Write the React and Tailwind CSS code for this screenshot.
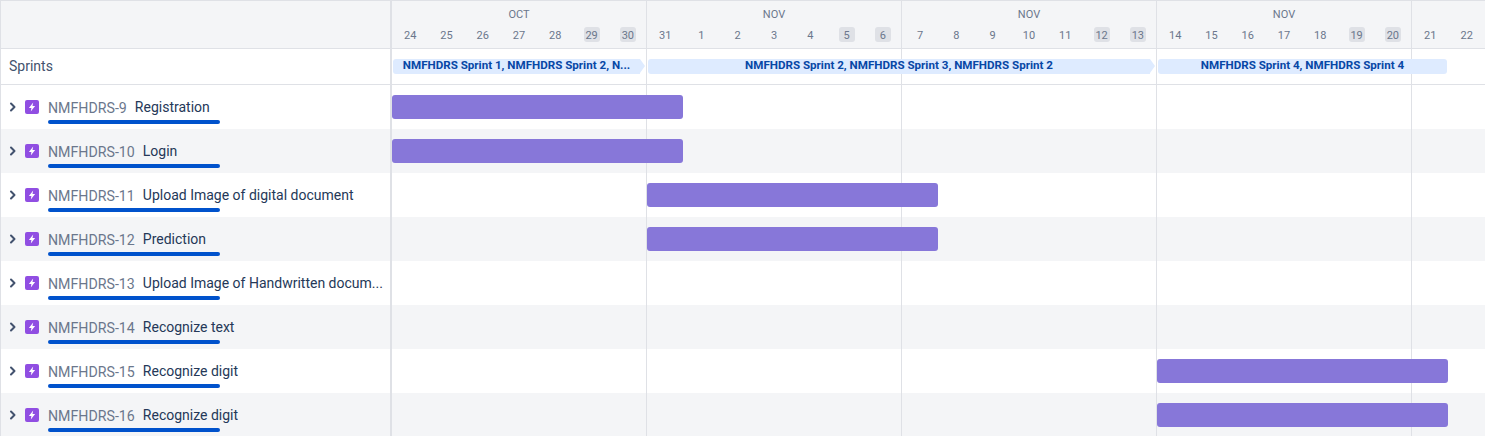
import React from 'react';

const weeks = [
    { month: 'OCT', days: [24, 25, 26, 27, 28, 29, 30] },
    { month: 'NOV', days: [31, 1, 2, 3, 4, 5, 6] },
    { month: 'NOV', days: [7, 8, 9, 10, 11, 12, 13] },
    { month: 'NOV', days: [14, 15, 16, 17, 18, 19, 20] },
];

const issues = [
    { id: 'NMFHDRS-9', name: 'Registration', bar: 'ml-0 w-[291px]' },
    { id: 'NMFHDRS-10', name: 'Login', bar: 'ml-0 w-[291px]' },
    { id: 'NMFHDRS-11', name: 'Upload Image of digital document', bar: 'ml-[255px] w-[291px]' },
    { id: 'NMFHDRS-12', name: 'Prediction', bar: 'ml-[255px] w-[291px]' },
    { id: 'NMFHDRS-13', name: 'Upload Image of Handwritten docum...' },
    { id: 'NMFHDRS-14', name: 'Recognize text' },
    { id: 'NMFHDRS-15', name: 'Recognize digit', bar: 'ml-[765px] w-[291px]' },
    { id: 'NMFHDRS-16', name: 'Recognize digit', bar: 'ml-[765px] w-[291px]' },
];

const WeekLines = () => (
    <div className="col-start-1 row-start-1 flex">
        {[0, 1, 2, 3].map(i => (
            <div key={i} className="w-[255px] shrink-0 border-r border-[#dfe1e6]" />
        ))}
    </div>
);

const Chevron = () => (
    <svg width="8" height="10" viewBox="0 0 8 10" className="shrink-0" fill="none">
        <path d="M2 1.500 5.500 5 2 8.500" stroke="#42526e" strokeWidth="2" strokeLinecap="round" strokeLinejoin="round" />
    </svg>
);

const EpicIcon = () => (
    <svg width="14" height="14" viewBox="0 0 14 14" className="shrink-0">
        <rect width="14" height="14" rx="2" fill="#904ee2" />
        <path d="M8.200 2.400 3.900 8h2.500l-.6 3.600 4.300-5.700H7.500z" fill="#fff" />
    </svg>
);

const SprintPill = ({ label, className, arrow }) => (
    <div className={`flex items-center h-[15px] shrink-0 ${className}`}>
        <div className={`flex-1 min-w-0 h-full bg-[#deebff] flex items-center justify-center text-[11.6px] leading-none font-bold text-[#0747a6] whitespace-nowrap ${arrow ? 'rounded-l-[3px]' : 'rounded-[3px]'}`}>
            {label}
        </div>
        {arrow && <div className="w-0 h-0 border-y-[7.5px] border-y-transparent border-l-[5px] border-l-[#deebff]" />}
    </div>
);

const IssueRow = ({ issue, shaded }) => (
    <div className={`flex h-[44px] shrink-0 ${shaded ? 'bg-[#f4f5f7]' : 'bg-white'}`}>
        <div className="w-[389px] shrink-0 flex pl-[8px] pt-[15px] gap-[8px]">
            <div className="h-[14px] flex items-center"><Chevron /></div>
            <EpicIcon />
            <div className="flex-1 min-w-0 ml-[1px] -mt-[1px]">
                <div className="whitespace-nowrap h-[19px] leading-[19px] text-[14px]">
                    <span className="text-[14.2px] text-[#6b778c] mr-[8px]">{issue.id}</span>
                    <span className="relative -top-px text-[#253858]">{issue.name}</span>
                </div>
                <div className="mt-[2px] h-[4px] w-[172px] rounded-full bg-[#0052cc]" />
            </div>
        </div>
        <div className="w-[2px] shrink-0 bg-[#dfe1e6]" />
        <div className="flex-1 min-w-0 grid">
            <WeekLines />
            {issue.bar && (
                <div className={`col-start-1 row-start-1 self-center h-[24px] rounded-[3px] bg-[#8777d9] ${issue.bar}`} />
            )}
        </div>
    </div>
);

export default function App() {
    return (
        <div className="w-[1485px] h-[436px] overflow-hidden flex flex-col bg-white border-l border-[#dfe1e6] font-['Roboto','Liberation_Sans',sans-serif]">
            {/* Header */}
            <div className="flex h-[49px] shrink-0 bg-[#f4f5f7] border-y border-[#dfe1e6]">
                <div className="w-[389px] shrink-0" />
                <div className="w-[2px] shrink-0 bg-[#dfe1e6]" />
                <div className="flex-1 min-w-0 flex">
                    {weeks.map((week, w) => (
                        <div key={w} className="w-[255px] shrink-0 border-r border-[#dfe1e6] flex flex-col items-stretch">
                            <div className="h-[26px] flex items-center justify-center text-[11px] text-[#6b778c] pt-[2px]">{week.month}</div>
                            <div className="grid grid-cols-7">
                                {week.days.map((day, d) => (
                                    <div key={day} className="flex justify-center">
                                        <span className={`h-[15px] min-w-[16px] flex items-center justify-center pt-px text-[11px] leading-none rounded-[3px] text-[#6b778c] ${d > 4 ? 'bg-[#dfe1e6]' : ''}`}>{day}</span>
                                    </div>
                                ))}
                            </div>
                        </div>
                    ))}
                    <div className="flex-1 grid grid-cols-2 pt-[26px]">
                        {[21, 22].map(day => (
                            <div key={day} className="flex justify-center">
                                <span className="h-[15px] flex items-center pt-px text-[11px] leading-none text-[#6b778c]">{day}</span>
                            </div>
                        ))}
                    </div>
                </div>
            </div>

            {/* Sprints row */}
            <div className="flex h-[36px] shrink-0 border-b border-[#dfe1e6]">
                <div className="w-[389px] shrink-0 pl-[8px] flex items-center text-[14px] text-[#42526e]">Sprints</div>
                <div className="w-[2px] shrink-0 bg-[#dfe1e6]" />
                <div className="flex-1 min-w-0 grid">
                    <WeekLines />
                    <div className="col-start-1 row-start-1 flex items-center pl-[1px] pb-[1px]">
                        <SprintPill arrow className="w-[252px]" label="NMFHDRS Sprint 1, NMFHDRS Sprint 2, N..." />
                        <SprintPill arrow className="w-[507px] ml-[3px]" label="NMFHDRS Sprint 2, NMFHDRS Sprint 3, NMFHDRS Sprint 2" />
                        <SprintPill className="w-[289px] ml-[3px]" label="NMFHDRS Sprint 4, NMFHDRS Sprint 4" />
                    </div>
                </div>
            </div>

            {/* Issue rows */}
            {issues.map((issue, i) => (
                <IssueRow key={issue.id} issue={issue} shaded={i % 2 === 1} />
            ))}
        </div>
    );
}
